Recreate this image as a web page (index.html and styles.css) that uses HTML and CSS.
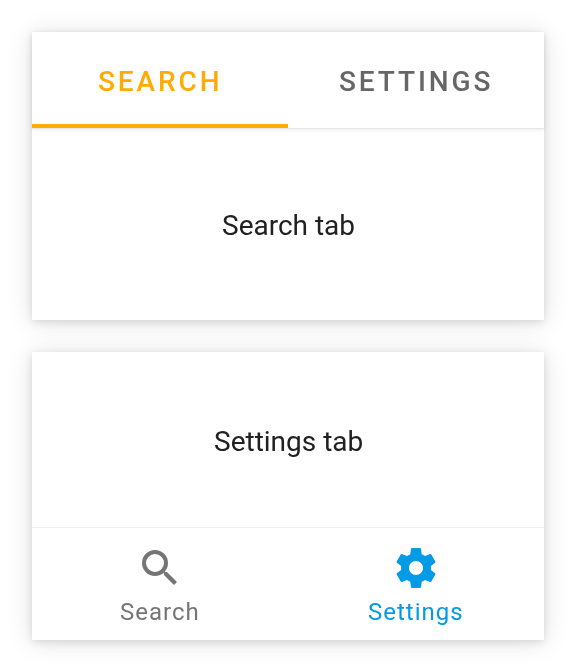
FILE: index.html
```html
<!DOCTYPE html>
<html lang="en">
<head>
<meta charset="utf-8">
<title>Tabs</title>
<link rel="stylesheet" href="styles.css">
</head>
<body>
<main class="page">
  <section class="card">
    <nav class="tabs">
      <a class="tab tab-active"><span class="label">SEARCH</span></a>
      <a class="tab"><span class="label">SETTINGS</span></a>
    </nav>
    <div class="content"><span class="label">Search tab</span></div>
  </section>
  <section class="card">
    <div class="content content-bottom"><span class="label">Settings tab</span></div>
    <nav class="bar">
      <a class="item">
        <svg class="icon" viewBox="0 0 24 24"><path fill-rule="evenodd" d="M9.5 3a6.5 6.5 0 1 0 0 13 6.5 6.5 0 0 0 0-13zm0 2a4.5 4.5 0 1 1 0 9 4.5 4.5 0 0 1 0-9zM15.5 14h-.79l-.28-.27-.7.7.27.28v.79l5 4.99L20.49 19z"/></svg>
        <span class="label">Search</span>
      </a>
      <a class="item item-active">
        <svg class="icon" viewBox="0 0 24 24"><path d="M19.43 12.98c.04-.32.07-.64.07-.98s-.03-.66-.07-.98l2.11-1.65c.19-.15.24-.42.12-.64l-2-3.46c-.12-.22-.39-.3-.61-.22l-2.49 1c-.52-.4-1.08-.73-1.69-.98l-.38-2.65C14.46 2.18 14.25 2 14 2h-4c-.25 0-.46.18-.49.42l-.38 2.65c-.61.25-1.17.59-1.69.98l-2.49-1c-.23-.09-.49 0-.61.22l-2 3.46c-.13.22-.07.49.12.64l2.11 1.65c-.04.32-.07.65-.07.98s.03.66.07.98l-2.11 1.65c-.19.15-.24.42-.12.64l2 3.46c.12.22.39.3.61.22l2.49-1c.52.4 1.08.73 1.69.98l.38 2.65c.03.24.24.42.49.42h4c.25 0 .46-.18.49-.42l.38-2.65c.61-.25 1.17-.59 1.69-.98l2.49 1c.23.09.49 0 .61-.22l2-3.46c.12-.22.07-.49-.12-.64l-2.11-1.65zM12 15.5c-1.93 0-3.5-1.57-3.5-3.5s1.57-3.5 3.5-3.5 3.5 1.57 3.5 3.5-1.57 3.5-3.5 3.5z"/></svg>
        <span class="label">Settings</span>
      </a>
    </nav>
  </section>
</main>
</body>
</html>
```
FILE: styles.css
```css
* { box-sizing: border-box; }
body { margin: 0; background: #fff; font-family: Roboto, sans-serif; }
.page { display: flex; flex-direction: column; gap: 32px; padding: 32px; }
.card { height: 288px; display: flex; flex-direction: column; background: #fff; box-shadow: 0 2px 8px rgba(0,0,0,.11), 0 2px 24px rgba(0,0,0,.12); }
.label { will-change: transform; }
.tabs { height: 97px; display: flex; border-bottom: 1px solid #e6e6e6; box-shadow: 0 1px 4px rgba(0,0,0,.07); }
.tab { flex: 1; height: 96px; display: flex; align-items: center; justify-content: center; padding-top: 7px; border-bottom: 4px solid transparent; font-size: 28px; font-weight: 500; letter-spacing: 2.9px; color: #666; }
.tab .label { margin-right: -1px; }
.tab-active { color: #ffab00; border-color: #ffab00; }
.content { flex: 1; display: flex; align-items: center; justify-content: center; padding: 2px 0 0 2px; font-size: 28px; color: #212121; }
.content-bottom { padding-top: 4px; }
.bar { height: 113px; display: flex; border-top: 1px solid #eee; }
.item { flex: 1; display: flex; flex-direction: column; align-items: center; gap: 6px; padding-top: 16px; font-size: 24px; line-height: 28px; letter-spacing: 1px; color: #757575; }
.item-active { color: #039be5; }
.icon { width: 48px; height: 48px; fill: currentColor; }
```
